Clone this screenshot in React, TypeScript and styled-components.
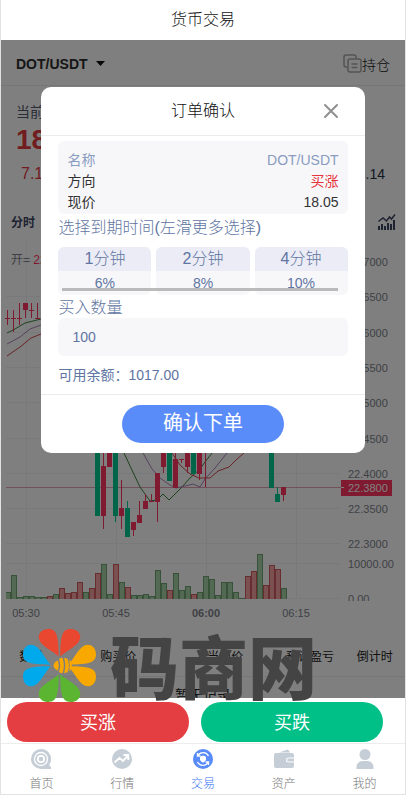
import React from "react";
import styled, { createGlobalStyle } from "styled-components";

const GlobalStyle = createGlobalStyle`
  * { box-sizing: border-box; }
  body {
    margin: 0;
    background: #fff;
    color: #333;
    font-family: "Liberation Sans", "Noto Sans CJK SC", sans-serif;
    font-size: 14px;
  }
  button, input { font-family: inherit; border: 0; padding: 0; margin: 0; }
  h1, h2, p, dl, dd { margin: 0; font-weight: 400; }
`;

const Shell = styled.div`
  position: relative;
  display: flex;
  flex-direction: column;
  height: 100vh;
  border: solid #e2e2e2;
  border-width: 0 1px 1px;
`;

const Header = styled.header`
  flex: none;
  height: 40px;
  display: flex;
  align-items: center;
  justify-content: center;
  h1 { font-size: 16px; line-height: 24px; font-weight: 300; color: #111; }
`;

const Main = styled.main`
  position: relative;
  flex: 1;
  min-height: 0;
  overflow: hidden;
`;

const Toolbar = styled.div`
  display: flex;
  align-items: center;
  justify-content: space-between;
  height: 46px;
  padding: 2px 15px 0;
  border-bottom: 1px solid #ededed;
`;

const PairButton = styled.button`
  display: flex;
  align-items: center;
  gap: 8px;
  background: none;
  font-size: 14px;
  font-weight: 700;
  color: #2c2c2c;
`;

const PositionsLink = styled.a`
  display: flex;
  align-items: center;
  font-size: 14px;
  font-weight: 300;
  color: #111;
  text-decoration: none;
`;

const Quote = styled.section`
  height: 119px;
  padding: 16px 20px 0 15px;
`;

const QuoteLabel = styled.p`
  font-size: 14px;
  line-height: 21px;
  color: #555a70;
`;

const QuotePrice = styled.p`
  font-size: 28px;
  line-height: 34px;
  font-weight: 700;
  color: #e23a40;
`;

const QuoteStats = styled.div`
  display: flex;
  justify-content: space-between;
  padding: 5px 0 0 5px;
  line-height: 24px;
`;

const Stat = styled.span<{ $size: number; $color: string }>`
  font-size: ${(p) => p.$size}px;
  color: ${(p) => p.$color};
`;

const ChartTabs = styled.div`
  display: flex;
  align-items: center;
  justify-content: space-between;
  height: 33px;
  padding: 0 9px 0 10px;
`;

const ChartTab = styled.button`
  background: none;
  font-size: 12px;
  font-weight: 700;
  color: #3d4664;
`;

const IconButton = styled.button`
  display: flex;
  background: none;
`;

const Chart = styled.svg`
  display: block;
  width: 100%;
  font-family: "Liberation Sans", "Noto Sans CJK SC", sans-serif;
  font-size: 11px;
`;

const Orders = styled.table`
  width: 100%;
  table-layout: fixed;
  border-collapse: collapse;
  font-size: 12px;
  color: #222;
  th {
    height: 40px;
    padding: 0;
    font-weight: 400;
    white-space: nowrap;
    border-bottom: 1px solid #ededed;
  }
  td {
    padding: 8px 0;
    font-size: 14px;
    line-height: 20px;
    text-align: center;
  }
`;

const Col = styled.col<{ $share: number }>`
  width: ${(p) => p.$share}%;
`;

const Overlay = styled.div`
  position: absolute;
  inset: 0;
  display: flex;
  justify-content: center;
  align-items: flex-start;
  padding-top: 47px;
  background: rgba(0, 0, 0, 0.5);
`;

const Dialog = styled.section`
  width: 80%;
  background: #fff;
  border-radius: 10px;
`;

const DialogHeader = styled.header`
  position: relative;
  display: flex;
  align-items: center;
  justify-content: center;
  height: 49px;
  border-bottom: 1px solid #ebebeb;
  h2 { font-size: 16px; line-height: 24px; font-weight: 300; color: #111; }
`;

const CloseButton = styled.button`
  position: absolute;
  right: 26px;
  top: 16px;
  display: flex;
  background: none;
`;

const DialogBody = styled.div`
  padding: 5px 17px 0;
  height: 258px;
  color: #5f75a2;
`;

const Summary = styled.dl`
  padding: 9px 9px 1px;
  background: #f7f7fa;
  border-radius: 6px;
`;

const SummaryRow = styled.div<{ $color: string }>`
  display: flex;
  justify-content: space-between;
  line-height: 21px;
  color: ${(p) => p.$color};
`;

const SummaryValue = styled.dd<{ $color?: string }>`
  color: ${(p) => p.$color ?? "inherit"};
`;

const FieldLabel = styled.label`
  display: block;
  font-size: 16px;
  line-height: 20px;
  font-weight: 300;
`;

const PeriodHeading = styled.p`
  padding: 2px 0 7px;
  font-size: 16px;
  line-height: 24px;
  font-weight: 300;
`;

const PeriodList = styled.div`
  position: relative;
  display: grid;
  grid-template-columns: repeat(3, 1fr);
  gap: 5px;
  margin-bottom: 3px;
`;

const Period = styled.button`
  display: flex;
  flex-direction: column;
  height: 48px;
  overflow: hidden;
  border-radius: 6px;
  background: #f7f7fa;
  color: #5f75a2;
`;

const PeriodName = styled.span`
  width: 100%;
  background: #ebecf5;
  font-size: 16px;
  line-height: 24px;
  font-weight: 300;
`;

const PeriodRate = styled.span`
  width: 100%;
  font-size: 14px;
  line-height: 24px;
`;

const ScrollThumb = styled.div`
  position: absolute;
  left: 4px;
  right: 10px;
  bottom: 4px;
  height: 3px;
  background: rgba(170, 170, 170, 0.8);
`;

const AmountInput = styled.input`
  display: block;
  width: 100%;
  height: 38px;
  padding: 0 14px;
  border-radius: 6px;
  background: #f7f7fa;
  font-size: 14px;
  color: #5f75a2;
`;

const Balance = styled.p`
  padding-top: 8px;
  line-height: 22px;
`;

const DialogFooter = styled.footer`
  display: flex;
  justify-content: center;
  padding: 10px 0;
  border-top: 1px solid #ebebeb;
`;

const ConfirmButton = styled.button`
  width: 50%;
  height: 38px;
  border-radius: 19px;
  background: #5a8cf9;
  color: #fff;
  font-size: 20px;
  line-height: 36px;
  padding-bottom: 2px;
`;

const TradeBar = styled.div`
  flex: none;
  display: flex;
  gap: 12px;
  padding: 4px 22px 1px 6px;
`;

const TradeButton = styled.button<{ $color: string }>`
  flex: 1;
  height: 40px;
  padding-bottom: 2px;
  border-radius: 20px;
  background: ${(p) => p.$color};
  color: #fff;
  font-size: 18px;
`;

const TabBar = styled.nav`
  flex: none;
  display: grid;
  grid-template-columns: repeat(5, 1fr);
  height: 51px;
  border-top: 1px solid #ededed;
`;

const TabLink = styled.a<{ $active?: boolean }>`
  display: flex;
  flex-direction: column;
  align-items: center;
  gap: 6px;
  padding-top: 5px;
  font-size: 12px;
  line-height: 18px;
  font-weight: 300;
  text-decoration: none;
  color: ${(p) => (p.$active ? "#3d76f2" : "#777")};
  svg { color: ${(p) => (p.$active ? "#5a8cf9" : "#c5cdd6")}; }
`;

const Watermark = styled.div`
  position: absolute;
  left: 21px;
  bottom: 92px;
  display: flex;
  align-items: center;
  gap: 13px;
  height: 74px;
  pointer-events: none;
  color: #444;
  font-family: "Noto Sans CJK SC", sans-serif;
  font-size: 69px;
  line-height: 72px;
  font-weight: 900;
  span { padding-bottom: 2px; }
`;

const RED = "#ff3560";
const GREEN = "#00ca92";

/* centre x, body top, body bottom, wick top, wick bottom, rising */
type Candle = [number, number, number, number, number, boolean];
const candles: Candle[] = [
  [7, 318, 319, 310, 325, true],
  [13, 318, 319, 310, 332, true],
  [19, 318, 319, 303, 325, true],
  [25, 303, 310, 303, 318, true],
  [31, 310, 311, 303, 318, true],
  [37, 318, 319, 303, 318, true],
  [97, 430, 516, 430, 516, false],
  [103, 466, 516, 440, 529, true],
  [109, 430, 467, 430, 467, true],
  [115, 430, 516, 430, 522, false],
  [121, 508, 516, 480, 529, true],
  [127, 508, 537, 501, 537, false],
  [133, 522, 530, 522, 536, true],
  [139, 515, 523, 501, 523, true],
  [145, 501, 509, 494, 509, true],
  [151, 501, 502, 494, 502, true],
  [157, 473, 502, 473, 522, true],
  [163, 440, 467, 440, 473, true],
  [169, 440, 481, 440, 481, false],
  [175, 459, 488, 440, 488, true],
  [181, 459, 460, 459, 463, true],
  [187, 440, 467, 440, 473, true],
  [193, 440, 474, 440, 474, false],
  [199, 440, 474, 440, 480, true],
  [205, 430, 431, 430, 487, true],
  [271, 430, 488, 430, 488, false],
  [277, 494, 502, 487, 502, false],
  [283, 487, 495, 487, 501, true],
];

/* one letter and bar height per six-pixel step; r = red, g = green */
const volumes =
  "g24 g2 g3 g3 g2 g2 r3 g5 r11 r6 r7 r17 g7 r11 r26 g35 g5 r35 g17 r12 g4 g4 g5 g3 g29 g16 r9 g26 g9 g13 r5 g7 g23 g20 g4 g17 g17 g7 g1 r23 r28 g45 r14 r34 r30 g11"
    .split(" ")
    .map((v) => ({ red: v[0] === "r", height: Number(v.slice(1)) }));

const averages = [
  { color: "#38863c", points: "7,333 15,329 25,323 41,319" },
  { color: "#ab84b8", points: "7,344 20,337 30,329 41,325" },
  { color: "#d0474e", points: "7,356 20,347 31,338 41,334" },
  {
    color: "#38863c",
    points:
      "124,453 131,468 140,487 150,501 157,500 163,494 169,500 176,493 182,487 190,478 200,469 205,462 212,453",
  },
  {
    color: "#ab84b8",
    points:
      "143,453 152,469 160,478 170,485 176,488 185,486 193,484 200,487 205,479 215,468 227,453",
  },
  {
    color: "#d0474e",
    points:
      "172,453 180,465 190,474 199,478 210,478 218,471 229,467 236,460 244,453",
  },
];

const priceLabels: [string, number][] = [
  ["22.7000", 262],
  ["22.6500", 297],
  ["22.6000", 333],
  ["22.5500", 368],
  ["22.5000", 403],
  ["22.4500", 439],
  ["22.4000", 474],
  ["22.3500", 509],
  ["22.3000", 544],
  ["10000.00", 564],
];

const timeLabels: [string, number][] = [
  ["05:30", 26],
  ["05:45", 116],
  ["06:00", 206],
  ["06:15", 296],
];

function PriceChart() {
  return (
    <Chart viewBox="1 238 404 398" role="img" aria-label="DOT/USDT">
      <defs>
        <clipPath id="axis-clip">
          <rect x="341" y="590" width="64" height="11" />
        </clipPath>
      </defs>
      <g fill="#f1f2f4" shapeRendering="crispEdges">
        {priceLabels.map(([t, y]) => (
          <rect key={t} x="6" y={y - 1} width="334" height="1" />
        ))}
        <rect x="6" y="598" width="334" height="1" />
        {timeLabels.map(([t, x]) => (
          <rect key={t} x={x} y="240" width="1" height="359" />
        ))}
      </g>
      <text x="11" y="264" fill="#80838c" fontSize="12">
        开= <tspan fill={RED}>22.6250</tspan>
      </text>
      <g shapeRendering="crispEdges">
        <rect x="6" y="592" width="5" height="7" fill="#6fa573" />
        <rect x="6" y="593" width="4" height="6" fill="#a6d2a8" />
        {volumes.map((v, i) => (
          <g key={i}>
            <rect
              x={11 + i * 6}
              y={599 - v.height}
              width="6"
              height={v.height}
              fill={v.red ? "#cf5a5e" : "#6fa573"}
            />
            <rect
              x={12 + i * 6}
              y={600 - v.height}
              width="4"
              height={Math.max(0, v.height - 1)}
              fill={v.red ? "#f4a0a2" : "#a6d2a8"}
            />
          </g>
        ))}
      </g>
      <g shapeRendering="crispEdges">
        <rect x="6" y="487" width="335" height="1" fill="#e2a0b2" />
      </g>
      <g fill="none">
        {averages.map((a, i) => (
          <polyline key={i} points={a.points} stroke={a.color} />
        ))}
      </g>
      <g shapeRendering="crispEdges">
        {candles.map(([x, top, bottom, high, low, up], i) => (
          <g key={i} fill={up ? RED : GREEN}>
            <rect x={x - 2} y={top} width="5" height={bottom - top} />
            <rect x={x} y={high} width="1" height={low - high} />
          </g>
        ))}
      </g>
      <g fill="#80838c">
        {priceLabels.map(([t, y]) => (
          <text key={t} x="348" y={y + 4}>
            {t}
          </text>
        ))}
        <text x="348" y="603" clipPath="url(#axis-clip)">
          0.00
        </text>
        {timeLabels.map(([t, x]) => (
          <text
            key={t}
            x={x}
            y="617"
            textAnchor="middle"
            fontWeight={t === "06:00" ? 700 : 400}
          >
            {t}
          </text>
        ))}
      </g>
      <rect x="341" y="480" width="51" height="16" fill={RED} />
      <rect x="341" y="487" width="3" height="1" fill="#fff" />
      <text x="348" y="492" fill="#fff">
        22.3800
      </text>
    </Chart>
  );
}

const PETALS = [
  { turn: 0, color: "#ea4730" },
  { turn: 90, color: "#f9a800" },
  { turn: 180, color: "#5cb531" },
  { turn: 270, color: "#00a8ec" },
];

function FlowerLogo() {
  const petal =
    "M-0.8 -9C-9 -16 -20.5 -20 -20.5 -28C-20.5 -33 -16 -36 -11 -36C-3 -36 -0.8 -30 -0.8 -9Z";
  return (
    <svg width="75" height="75" viewBox="-37 -37 74 74" aria-hidden="true">
      {PETALS.map((p) => (
        <g key={p.turn} fill={p.color} transform={`rotate(${p.turn})`}>
          <path d={petal} />
          <path d={petal} transform="scale(-1 1)" />
        </g>
      ))}
      <g fill="#f9a800">
        <path d="M-6 0Q-5 -4 -1.500 -5Q0 0 -1.500 5Q-5 4 -6 0Z" />
        <path d="M-0.500 -6.500Q1.500 -8 3 -7.500Q5.500 0 3 7.500Q1.500 8 -0.500 6.500Q2 0 -0.500 -6.500Z" />
        <path d="M4.500 -7.500Q7 -7.500 8 -6.500Q10.500 0 8 6.500Q7 7.500 4.500 7.500Q7 0 4.500 -7.500Z" />
        <path d="M9.500 -6Q12 -4.500 12.200 0Q12 4.500 9.500 6Q11.200 0 9.500 -6Z" />
      </g>
    </svg>
  );
}

const icons = {
  home: (
    <>
      <path d="M10 0a10 10 0 1 0 0 20h10v-2l-2-2A10 10 0 0 0 10 0Z" fill="currentColor" />
      <circle cx="10" cy="10" r="6.5" fill="none" stroke="#fff" strokeWidth="1.3" />
      <circle cx="10" cy="10" r="3.2" fill="none" stroke="#fff" strokeWidth="1.8" />
    </>
  ),
  trend: (
    <>
      <circle cx="10" cy="10" r="10" fill="currentColor" />
      <path
        d="M2.500 13.500 7.500 9l3.500 3L16 6.500M11.500 6H16.300V11"
        fill="none"
        stroke="#fff"
        strokeWidth="1.9"
      />
    </>
  ),
  trade: (
    <>
      <circle cx="10" cy="10" r="10" fill="currentColor" />
      <path
        d="M5 6.500A6 6 0 0 1 15.500 7M15 13.500A6 6 0 0 1 4.500 13M4.500 4v3h3M15.500 16v-3h-3"
        fill="none"
        stroke="#fff"
        strokeWidth="1.3"
      />
      <path d="M10 6.500 13 7.800v2.400q0 2.300-3 3.600q-3-1.300-3-3.600V7.800Z" fill="#fff" />
    </>
  ),
  wallet: (
    <>
      <path d="M5 3.500 14 0.500 16 3.500Z" fill="currentColor" />
      <path
        d="M2 4h16a2 2 0 0 1 2 2v2.500h-5.500a2.500 2.500 0 0 0 0 5H20V17a2 2 0 0 1-2 2H2a2 2 0 0 1-2-2V6a2 2 0 0 1 2-2Z"
        fill="currentColor"
      />
      <path d="M14.500 9.500H20v3h-5.500a1.500 1.500 0 0 1 0-3Z" fill="currentColor" />
    </>
  ),
  user: (
    <>
      <circle cx="10" cy="5.500" r="5.500" fill="currentColor" />
      <path d="M1.500 20v-2c0-3.500 3-6 6-6h5c3 0 6 2.500 6 6v2Z" fill="currentColor" />
    </>
  ),
};

const tabs: { icon: keyof typeof icons; label: string }[] = [
  { icon: "home", label: "首页" },
  { icon: "trend", label: "行情" },
  { icon: "trade", label: "交易" },
  { icon: "wallet", label: "资产" },
  { icon: "user", label: "我的" },
];

const periods = [
  { name: "1分钟", rate: "6%" },
  { name: "2分钟", rate: "8%" },
  { name: "4分钟", rate: "10%" },
];

export default function App() {
  const [amount, setAmount] = React.useState("100");
  return (
    <>
      <GlobalStyle />
      <Shell>
        <Header>
          <h1>货币交易</h1>
        </Header>
        <Main>
          <Toolbar>
            <PairButton>
              DOT/USDT
              <svg width="9" height="5" viewBox="0 0 9 5" aria-hidden="true">
                <path d="M0 0h9L4.500 5Z" fill="#111" />
              </svg>
            </PairButton>
            <PositionsLink href="#positions">
              <svg
                width="19"
                height="19"
                viewBox="0 0 19 19"
                fill="none"
                stroke="#a8a8a8"
                strokeWidth="1.5"
                aria-hidden="true"
              >
                <path d="M4.500 13H3a2 2 0 0 1-2-2V3a2 2 0 0 1 2-2h8a2 2 0 0 1 2 2v1.500" />
                <rect x="5" y="5" width="13" height="13" rx="2" />
                <path d="M8.500 10h6M8.500 13.500h6" />
              </svg>
              持仓
            </PositionsLink>
          </Toolbar>
          <Quote>
            <QuoteLabel>当前价</QuoteLabel>
            <QuotePrice>18.05</QuotePrice>
            <QuoteStats>
              <Stat $size={16} $color="#e23a40">7.12%</Stat>
              <Stat $size={14} $color="#26304a">18.14</Stat>
            </QuoteStats>
          </Quote>
          <ChartTabs>
            <ChartTab>分时</ChartTab>
            <IconButton aria-label="指标">
              <svg width="18" height="16" viewBox="0 0 18 16" aria-hidden="true">
                <path
                  d="M0 12h2v4H0zM3 10h2v6H3zM6 12h2v4H6zM9 9h2v7H9zM12 10h2v6h-2zM15 6h2v10h-2z"
                  fill="#3d4664"
                />
                <path
                  d="M0.500 7.500 5 4l3.500 3 3-4 2 2L17 0.500"
                  fill="none"
                  stroke="#3d4664"
                  strokeWidth="1.5"
                />
              </svg>
            </IconButton>
          </ChartTabs>
          <PriceChart />
          <Orders>
            <colgroup>
              <Col $share={15} />
              <Col $share={28} />
              <Col $share={25} />
              <Col $share={17} />
              <Col $share={15} />
            </colgroup>
            <thead>
              <tr>
                <th>数量</th>
                <th>购买价</th>
                <th>当前价</th>
                <th>预计盈亏</th>
                <th>倒计时</th>
              </tr>
            </thead>
            <tbody>
              <tr>
                <td colSpan={5}>暂无记录</td>
              </tr>
            </tbody>
          </Orders>
          <Overlay>
            <Dialog role="dialog" aria-labelledby="order-title">
              <DialogHeader>
                <h2 id="order-title">订单确认</h2>
                <CloseButton aria-label="关闭">
                  <svg width="16" height="16" viewBox="0 0 16 16" aria-hidden="true">
                    <path
                      d="M2 2l12 12M14 2 2 14"
                      stroke="#909090"
                      strokeWidth="2"
                      strokeLinecap="round"
                    />
                  </svg>
                </CloseButton>
              </DialogHeader>
              <DialogBody>
                <Summary>
                  <SummaryRow $color="#8a9cc0">
                    <dt>名称</dt>
                    <SummaryValue>DOT/USDT</SummaryValue>
                  </SummaryRow>
                  <SummaryRow $color="#333">
                    <dt>方向</dt>
                    <SummaryValue $color="#e5343c">买涨</SummaryValue>
                  </SummaryRow>
                  <SummaryRow $color="#333">
                    <dt>现价</dt>
                    <SummaryValue>18.05</SummaryValue>
                  </SummaryRow>
                </Summary>
                <PeriodHeading>选择到期时间(左滑更多选择)</PeriodHeading>
                <PeriodList>
                  {periods.map((p) => (
                    <Period key={p.name}>
                      <PeriodName>{p.name}</PeriodName>
                      <PeriodRate>{p.rate}</PeriodRate>
                    </Period>
                  ))}
                  <ScrollThumb />
                </PeriodList>
                <FieldLabel htmlFor="amount">买入数量</FieldLabel>
                <AmountInput
                  id="amount"
                  value={amount}
                  onChange={(e) => setAmount(e.target.value)}
                />
                <Balance>可用余额：1017.00</Balance>
              </DialogBody>
              <DialogFooter>
                <ConfirmButton>确认下单</ConfirmButton>
              </DialogFooter>
            </Dialog>
          </Overlay>
        </Main>
        <TradeBar>
          <TradeButton $color="#e43d42">买涨</TradeButton>
          <TradeButton $color="#00c087">买跌</TradeButton>
        </TradeBar>
        <TabBar>
          {tabs.map((t) => (
            <TabLink key={t.icon} href={`#${t.icon}`} $active={t.icon === "trade"}>
              <svg width="20" height="20" viewBox="0 0 20 20" aria-hidden="true">
                {icons[t.icon]}
              </svg>
              {t.label}
            </TabLink>
          ))}
        </TabBar>
        <Watermark>
          <FlowerLogo />
          <span>码商网</span>
        </Watermark>
      </Shell>
    </>
  );
}
